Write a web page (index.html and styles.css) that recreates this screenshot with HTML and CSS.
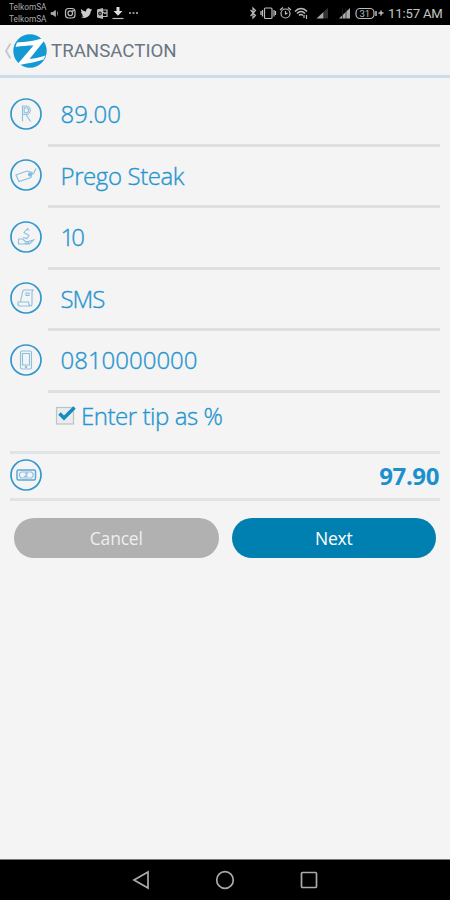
FILE: index.html
```html
<!DOCTYPE html>
<html lang="en">
<head>
<meta charset="utf-8">
<title>Transaction</title>
<link rel="stylesheet" href="styles.css">
</head>
<body>
<div class="status">
  <div class="carrier"><span>TelkomSA</span><span>TelkomSA</span></div>
  <svg class="status-left" width="92" height="16" viewBox="0 0 92 16" fill="none" stroke="#bbb" stroke-width="1.2">
    <path d="M1 7.500h1.500l3-2v6l-3-2H1zM7.500 6.500v4" fill="#aaa" stroke-width=".6"/>
    <rect x="15.500" y="3.500" width="9.500" height="9.500" rx="3"/><circle cx="20.250" cy="8.250" r="2.300"/><circle cx="23" cy="5.700" r=".4"/>
    <path d="M31 4c1.600 1.700 3.300 2.400 5 2.500C35.800 3.500 39 2.500 40.300 4.200L42 3.700l-1 1.500 1 .2-1.300 1.200C40.500 11.500 35.500 14.500 31 12c1.500 0 2.300-.4 3-.9-1.400-.2-2-1-2.200-1.700h1C31.600 8.700 31 7.800 31 6.800l1 .2C31 6 30.700 5 31 4z" fill="#ccc" stroke="none"/>
    <path d="M47 4.500l6-1.500v11l-6-1.500z" fill="#bbb" stroke="none"/><circle cx="50" cy="8.500" r="1.300" stroke="#222"/><path d="M53 5h4v6.500h-4M53 7l2 1.500L57 7"/>
    <path d="M66.500 2h3v4h3L68 10.700 63.500 6h3z" fill="#ddd" stroke="none"/><path d="M62.500 13.500h11"/>
    <path d="M79 8h2m1.500 0h2m1.500 0h2" stroke-width="1.700"/>
  </svg>
  <div class="spacer"></div>
  <svg class="status-right" width="136" height="16" viewBox="0 0 136 16" fill="none" stroke="#bbb" stroke-width="1.200">
    <path d="M1.500 5l5 5.500L4 13V3l2.500 2.500L1.500 11"/>
    <rect x="15.500" y="3" width="7.500" height="10.500" rx="1"/><path d="M13.500 5v6.500M25 5v6.500M12 6v4M26.500 6v4"/>
    <circle cx="36.500" cy="8.500" r="4.500"/><path d="M36.500 6v3l2-1M31 5l3-2.500M42 5l-3-2.500"/>
    <path d="M46 6.500c3.500-4 8.500-4 12 0M48 8.500c2.500-2.700 5.500-2.700 8 0M50 10.500c1.500-1.500 2.500-1.500 4 0" stroke-width="1.500"/><path d="M55 13v-3m2.500 0v4"/>
    <path d="M67.500 13.500l7-6.500v6.500z" fill="#aaa" stroke="none"/><path d="M75 13.500V6.500l4-3.500v10.500z" fill="#333" stroke="none"/>
    <path d="M90 13.500L101 3v10.500z" fill="#aaa" stroke="none"/><path d="M93.500 3v11M97 3v11" stroke="#222" stroke-width=".7"/>
    <rect x="107" y="3.500" width="18" height="10" rx="4"/><path d="M127 6v5" stroke-width="1.500"/>
    <text x="110.500" y="12.200" class="battery">31</text>
    <path d="M129.500 8h5M132 5.500v5" stroke-width="1.500"/>
  </svg>
  <span class="clock">11:57 AM</span>
</div>
<header class="header">
  <svg class="back" width="8" height="18" viewBox="0 0 8 18" fill="none" stroke="#c4c8ca" stroke-width="1.800"><path d="M6.500 1.500L2 9l4.500 7.500"/></svg>
  <svg class="logo" width="34" height="34" viewBox="0 0 34 34">
    <circle cx="17" cy="17" r="16.700" fill="#139ad4"/>
    <path d="M4 8.500C11 8 22 7 29 4.500L31 7 16.500 25C22 24.500 27 23.500 32.500 21.500L30.500 25.500C23 28.500 14 29 6.500 31L5.500 29 20.500 11.500C14 11.500 8 12 2.500 13z" fill="#fff"/>
  </svg>
  <h1>TRANSACTION</h1>
</header>
<main>
  <section class="fields">
    <div class="row">
      <svg class="icon" viewBox="0 0 32 32"><circle class="ring" cx="16" cy="16" r="15"/><path d="M12.500 23.500V8h3.500a4 4 0 0 1 0 8.500h-3.500M16 16.500l4.500 7M14.200 14.800V9.700H16a2.500 2.500 0 0 1 0 5.100z"/></svg>
      <div class="value amount">89.00</div>
    </div>
    <div class="row">
      <svg class="icon" viewBox="0 0 32 32"><circle class="ring" cx="16" cy="16" r="15"/><path d="M6 16l11-4 5 1.500-1 5L9 22.500zM20 16l3.500-1.500L26 9.500"/><circle cx="20" cy="15.500" r="1.600" fill="#75b5dc"/></svg>
      <div class="value item">Prego Steak</div>
    </div>
    <div class="row">
      <svg class="icon" viewBox="0 0 32 32"><circle class="ring" cx="16" cy="16" r="15"/><path d="M8.500 18h4l3 2.500h3v1.500h-4M8.500 18v5h11l4-4-4 1-1 1M19.500 9l-3-.5-2.500 3 5 3-2 3-4-1M18 7l-1 2"/></svg>
      <div class="value tip">10</div>
    </div>
    <div class="row">
      <svg class="icon" viewBox="0 0 32 32"><circle class="ring" cx="16" cy="16" r="15"/><path d="M10.500 19.500l2-9.500q.5-2 2-2H23l-1 2v12.500q0 1.500-1.500 1.500H9q-1.500-1-1-4h10.500q0 3 2 4M16 11h3v2.500h-3z"/></svg>
      <div class="value channel">SMS</div>
    </div>
    <div class="row">
      <svg class="icon" viewBox="0 0 32 32"><circle class="ring" cx="16" cy="16" r="15"/><rect x="10.500" y="7" width="11" height="18" rx="1.500"/><path d="M12.500 9.500h7v11.500h-7z"/><circle cx="16" cy="23" r=".7"/></svg>
      <div class="value phone">0810000000</div>
    </div>
  </section>
  <div class="check-row">
    <svg class="check" width="22" height="20" viewBox="0 0 22 20"><rect x="1.500" y="1.500" width="17" height="16.500" fill="#e9eded" stroke="#bdc3c6" stroke-width="1.200"/><path d="M4.500 7.500l4.500 4.500L19.500 1.500" fill="none" stroke="#168bbd" stroke-width="3.500"/></svg>
    <span class="check-label">Enter tip as %</span>
  </div>
  <div class="total">
    <svg class="icon" viewBox="0 0 32 32"><circle class="ring" cx="16" cy="16" r="15"/><rect class="note" x="7" y="11" width="18.500" height="10" rx="1.500"/><path d="M11 13h10.500l1.500 1.500v3L21.500 19H11l-1.500-1.500v-3zM15 14.500q3-1 2 1l-2 2h2.500"/></svg>
    <strong>97.90</strong>
  </div>
  <div class="buttons"><button class="cancel">Cancel</button><button class="next">Next</button></div>
</main>
<nav class="navbar">
  <svg width="18" height="20" viewBox="0 0 18 20"><path d="M16 2v16L2 10z"/></svg>
  <svg width="20" height="20" viewBox="0 0 20 20"><circle cx="10" cy="10" r="8.300"/></svg>
  <svg width="18" height="20" viewBox="0 0 18 20"><rect x="1.500" y="2.500" width="15" height="15" rx="1"/></svg>
</nav>
</body>
</html>
```
FILE: styles.css
```css
* { box-sizing: border-box; }
body {
  margin: 0;
  height: 900px;
  display: flex;
  flex-direction: column;
  background: #f4f4f4;
  font-family: "Open Sans", "Noto Sans", sans-serif;
  color: #2795cf;
  overflow: hidden;
}
svg { display: block; flex: none; }
.status {
  height: 25px;
  flex: none;
  display: flex;
  align-items: center;
  background: #000;
  padding: 1px 8px 0 9px;
  color: #c4c4c4;
  font-family: Roboto, sans-serif;
}
.carrier {
  width: 41px;
  display: flex;
  flex-direction: column;
  font-size: 8.300px;
  line-height: 12px;
  color: #aaa;
}
.spacer { flex: 1; }
.battery { font: 9.500px Roboto, sans-serif; fill: #bbb; stroke: none; }
.clock { font-size: 13.200px; letter-spacing: -.2px; width: 54px; margin-left: 3px; white-space: nowrap; }
.header {
  height: 53px;
  flex: none;
  display: flex;
  align-items: center;
  border-bottom: 3px solid #cbdeec;
  padding: 1px 0 0 4px;
}
.logo { margin-left: 1px; }
h1 {
  margin: 0 0 0 4px;
  font: 400 18.700px Roboto, sans-serif;
  color: #6b7682;
  white-space: nowrap;
}
main { flex: 1; padding: 7px 10px 0; }
.row {
  display: grid;
  grid-template-columns: 38px 1fr;
  height: 61.500px;
}
.icon {
  width: 32px;
  height: 32px;
  margin-top: 12.500px;
  fill: none;
  stroke: #8bbfde;
  stroke-width: 1.100;
}
.icon .ring { stroke: #3297cd; stroke-width: 1.700; }
.icon .note { stroke: #5ba7d3; stroke-width: 1.500; }
.value {
  border-bottom: 3px solid #dedfdf;
  padding-left: 12.500px;
  font-size: 24px;
  font-weight: 300;
  line-height: 58px;
  -webkit-text-stroke: .35px currentColor;
  white-space: nowrap;
}
.item { letter-spacing: -.4px; }
.tip { letter-spacing: -3px; }
.channel { letter-spacing: -1px; }
.check-row {
  height: 61px;
  display: flex;
  border-bottom: 3px solid #dfe3e3;
  padding-left: 45px;
}
.check { margin-top: 13px; }
.check-label {
  margin-left: 4px;
  font-size: 24px;
  font-weight: 300;
  line-height: 46px;
  letter-spacing: -.45px;
  -webkit-text-stroke: .35px currentColor;
  white-space: nowrap;
}
.total {
  height: 47px;
  display: flex;
  justify-content: space-between;
  border-bottom: 3px solid #dfe3e3;
}
.total .icon { margin-top: 5.500px; }
.total strong { font-size: 24px; line-height: 44px; letter-spacing: -.4px; color: #1c90cf; margin-right: 1px; }
.buttons { display: flex; gap: 13px; padding: 17.500px 4px 0; }
button {
  flex: 1;
  height: 40px;
  border: 0;
  border-radius: 20px;
  padding: 0 0 1px;
  font: 400 17.500px "Open Sans", sans-serif;
  letter-spacing: -.2px;
  color: #fff;
}
.cancel { background: #b1b1b1; color: #eee; }
.next { background: #0080b0; }
.navbar {
  height: 41px;
  flex: none;
  display: flex;
  justify-content: center;
  align-items: center;
  gap: 65px;
  background: #000;
  border-top: 1.500px solid #777;
}
.navbar svg { fill: none; stroke: #aaa; stroke-width: 1.700; }
```
